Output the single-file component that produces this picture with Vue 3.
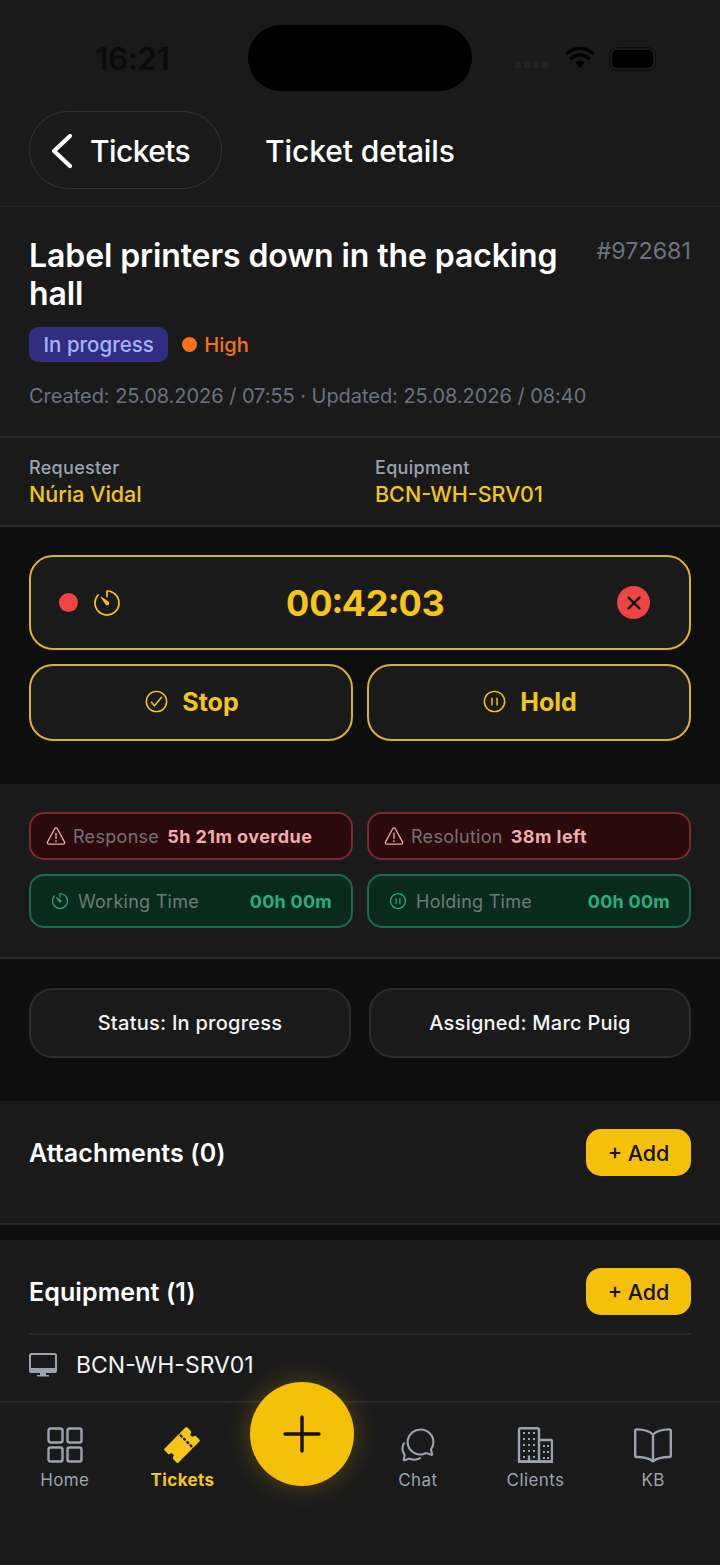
<script setup>
const navLeft = [
  { label: 'Home', key: 'home' },
  { label: 'Tickets', key: 'ticket', active: true },
]
const navRight = [
  { label: 'Chat', key: 'chat' },
  { label: 'Clients', key: 'clients' },
  { label: 'KB', key: 'kb' },
]
</script>

<template>
  <div class="app">
    <div class="scroll">
      <div class="top">
        <div class="statusbar">
          <span class="time">16:21</span>
          <span class="island"></span>
          <span class="signal"><i></i><i></i><i></i><i></i></span>
          <svg class="wifi" viewBox="0 0 32 26" width="30" height="24"><path d="M16 25 11 19a7.5 7.5 0 0 1 10 0Z" fill="#000"/><path d="M6.5 14.5a14 14 0 0 1 19 0M2 9a21 21 0 0 1 28 0" fill="none" stroke="#000" stroke-width="3.6" stroke-linecap="round"/></svg>
          <span class="battery"><i></i></span>
        </div>
        <div class="header">
          <div class="back">
            <svg viewBox="0 0 24 40" width="24" height="40"><path d="M20 5 4 20l16 15" fill="none" stroke="#fff" stroke-width="4.2" stroke-linecap="round" stroke-linejoin="round"/></svg>
            <span>Tickets</span>
          </div>
          <div class="header-title">Ticket details</div>
        </div>
      </div>

      <section class="info">
        <div class="title-row">
          <h1>Label printers down in the packing hall</h1>
          <span class="num">#972681</span>
        </div>
        <div class="badges">
          <span class="badge">In progress</span>
          <span class="prio"><i></i>High</span>
        </div>
        <p class="meta">Created: 25.08.2026 / 07:55 · Updated: 25.08.2026 / 08:40</p>
      </section>

      <section class="people">
        <div><div class="lbl">Requester</div><div class="val">Núria Vidal</div></div>
        <div><div class="lbl">Equipment</div><div class="val">BCN-WH-SRV01</div></div>
      </section>

      <section class="timer-sec">
        <div class="timer">
          <span class="rec"></span>
          <svg class="timer-ic" viewBox="0 0 512 512" width="32" height="32"><path d="M112.91 128A191.85 191.85 0 0 0 64 254c-1.18 106.35 85.65 193.8 192 194 106.2.2 192-85.83 192-192 0-104.54-83.55-189.61-187.5-192a4.36 4.36 0 0 0-4.5 4.37V152" fill="none" stroke="currentColor" stroke-width="28" stroke-linecap="round"/><path d="M233.38 278.63l-79-113a8.13 8.13 0 0 1 11.32-11.32l113 79a32.5 32.5 0 0 1-37.25 53.26 33.21 33.21 0 0 1-8.07-8.94z" fill="currentColor"/></svg>
          <span class="clock">00:42:03</span>
          <span class="close"><svg viewBox="0 0 20 20" width="18" height="18"><path d="M4 4l12 12M16 4 4 16" stroke="#1a1a1a" stroke-width="2.8" stroke-linecap="round"/></svg></span>
        </div>
        <div class="two gap14">
          <div class="tbtn">
            <svg viewBox="0 0 512 512" width="27" height="27"><path d="M448 256c0-106-86-192-192-192S64 150 64 256s86 192 192 192 192-86 192-192z" fill="none" stroke="currentColor" stroke-width="28"/><path d="M352 176L217.6 336 160 272" fill="none" stroke="currentColor" stroke-width="28" stroke-linecap="round" stroke-linejoin="round"/></svg>
            Stop
          </div>
          <div class="tbtn">
            <svg viewBox="0 0 512 512" width="27" height="27"><path d="M448 256c0-106-86-192-192-192S64 150 64 256s86 192 192 192 192-86 192-192z" fill="none" stroke="currentColor" stroke-width="28"/><path d="M208 192v128M304 192v128" fill="none" stroke="currentColor" stroke-width="28" stroke-linecap="round"/></svg>
            Hold
          </div>
        </div>
      </section>

      <section class="sla">
        <div class="two gap14">
          <div class="chip red">
            <svg viewBox="0 0 512 512" width="22" height="22"><path d="M85.57 446.25h340.86a32 32 0 0 0 28.17-47.17L284.18 82.58c-12.09-22.44-44.27-22.44-56.36 0L57.4 399.08a32 32 0 0 0 28.17 47.17z" fill="none" stroke="currentColor" stroke-width="30" stroke-linejoin="round"/><path d="M256 190v125" fill="none" stroke="currentColor" stroke-width="30" stroke-linecap="round"/><circle cx="256" cy="377" r="20" fill="currentColor"/></svg>
            <span class="k">Response</span><b>5h 21m overdue</b>
          </div>
          <div class="chip red">
            <svg viewBox="0 0 512 512" width="22" height="22"><path d="M85.57 446.25h340.86a32 32 0 0 0 28.17-47.17L284.18 82.58c-12.09-22.44-44.27-22.44-56.36 0L57.4 399.08a32 32 0 0 0 28.17 47.17z" fill="none" stroke="currentColor" stroke-width="30" stroke-linejoin="round"/><path d="M256 190v125" fill="none" stroke="currentColor" stroke-width="30" stroke-linecap="round"/><circle cx="256" cy="377" r="20" fill="currentColor"/></svg>
            <span class="k">Resolution</span><b>38m left</b>
          </div>
        </div>
        <div class="two gap14">
          <div class="chip green">
            <svg viewBox="0 0 512 512" width="22" height="22"><path d="M112.91 128A191.85 191.85 0 0 0 64 254c-1.18 106.35 85.65 193.8 192 194 106.2.2 192-85.83 192-192 0-104.54-83.55-189.61-187.5-192a4.36 4.36 0 0 0-4.5 4.37V152" fill="none" stroke="currentColor" stroke-width="32" stroke-linecap="round"/><path d="M233.38 278.63l-79-113a8.13 8.13 0 0 1 11.32-11.32l113 79a32.5 32.5 0 0 1-37.25 53.26 33.21 33.21 0 0 1-8.07-8.94z" fill="currentColor"/></svg>
            <span class="k">Working Time</span><b>00h 00m</b>
          </div>
          <div class="chip green">
            <svg viewBox="0 0 512 512" width="22" height="22"><path d="M448 256c0-106-86-192-192-192S64 150 64 256s86 192 192 192 192-86 192-192z" fill="none" stroke="currentColor" stroke-width="32"/><path d="M208 192v128M304 192v128" fill="none" stroke="currentColor" stroke-width="32" stroke-linecap="round"/></svg>
            <span class="k">Holding Time</span><b>00h 00m</b>
          </div>
        </div>
      </section>

      <section class="actions">
        <div class="act">Status: In progress</div>
        <div class="act">Assigned: Marc Puig</div>
      </section>

      <section class="block attach">
        <h2>Attachments (0)</h2>
        <span class="add">+ Add</span>
      </section>

      <section class="block equip">
        <div class="equip-head">
          <h2>Equipment (1)</h2>
          <span class="add">+ Add</span>
        </div>
        <div class="equip-row">
          <svg viewBox="0 0 28 24" width="28" height="24"><rect x="1" y="1" width="26" height="18" rx="1.6" fill="none" stroke="#9ca3af" stroke-width="2"/><rect x="1" y="15" width="26" height="4.5" fill="#9ca3af"/><path d="M11 19.5h6v2.4h-6zM8 22h12v1.6H8z" fill="#9ca3af"/></svg>
          <span>BCN-WH-SRV01</span>
        </div>
      </section>
    </div>

    <nav class="nav">
      <div v-for="n in navLeft" :key="n.key" class="tab" :class="{ on: n.active }">
        <svg v-if="n.key === 'home'" viewBox="0 0 36 36" width="36" height="36"><g fill="none" stroke="currentColor" stroke-width="2.4"><rect x="1.5" y="1.5" width="14" height="14" rx="2"/><rect x="20.5" y="1.5" width="14" height="14" rx="2"/><rect x="1.5" y="20.5" width="14" height="14" rx="2"/><rect x="20.5" y="20.5" width="14" height="14" rx="2"/></g></svg>
        <svg v-else viewBox="0 0 512 512" width="40" height="40"><path fill="currentColor" d="M490.18 181.4l-44.13-44.13a20 20 0 0 0-27-1 30.81 30.81 0 0 1-41.68-1.6 30.81 30.81 0 0 1-1.6-41.67 20 20 0 0 0-1-27L330.6 21.82a19.91 19.91 0 0 0-28.13 0l-70.35 70.34a39.87 39.87 0 0 0-9.57 15.5 7.71 7.71 0 0 1-4.83 4.83 39.78 39.78 0 0 0-15.5 9.58l-180.4 180.4a19.91 19.91 0 0 0 0 28.13L66 374.73a20 20 0 0 0 27 1 30.69 30.69 0 0 1 43.28 43.28 20 20 0 0 0 1 27l44.13 44.13a19.91 19.91 0 0 0 28.13 0l180.4-180.4a39.82 39.82 0 0 0 9.58-15.49 7.69 7.69 0 0 1 4.84-4.84 39.84 39.84 0 0 0 15.49-9.57l70.34-70.35a19.91 19.91 0 0 0-.01-28.09zm-228.37-29.65a16 16 0 0 1-22.63 0l-11.51-11.51a16 16 0 0 1 22.63-22.62l11.51 11.5a16 16 0 0 1 0 22.63zm44 44a16 16 0 0 1-22.62 0l-11-11a16 16 0 1 1 22.63-22.63l11 11a16 16 0 0 1 .01 22.66zm44 44a16 16 0 0 1-22.63 0l-11-11a16 16 0 0 1 22.63-22.62l11 11a16 16 0 0 1 .05 22.65zm44.43 44.54a16 16 0 0 1-22.63 0l-11.44-11.5a16 16 0 1 1 22.68-22.57l11.45 11.49a16 16 0 0 1-.01 22.58z"/></svg>
        <span>{{ n.label }}</span>
      </div>
      <div class="tab spacer"></div>
      <div v-for="n in navRight" :key="n.key" class="tab">
        <svg v-if="n.key === 'chat'" viewBox="0 0 512 512" width="40" height="40"><g fill="none" stroke="currentColor" stroke-width="28" stroke-linecap="round" stroke-miterlimit="10"><path d="M431 320.6c-1-3.6 1.2-8.6 3.3-12.2a33.68 33.68 0 0 1 2.1-3.1A162 162 0 0 0 464 215c.3-92.2-77.5-167-173.7-167-83.9 0-153.9 57.1-170.3 132.9a160.7 160.7 0 0 0-3.7 34.2c0 92.3 74.8 169.1 171 169.1 15.3 0 35.9-4.6 47.2-7.7s22.5-7.2 25.4-8.3a26.44 26.44 0 0 1 9.3-1.7 26 26 0 0 1 10.1 2l56.7 20.1a13.52 13.52 0 0 0 3.9 1 8 8 0 0 0 8-8 12.85 12.85 0 0 0-.5-2.7z"/><path d="M66.46 232a146.23 146.23 0 0 0 6.39 152.67c2.31 3.49 3.61 6.19 3.21 8s-11.93 61.87-11.93 61.87a8 8 0 0 0 2.71 7.68A8.17 8.17 0 0 0 72 464a7.26 7.26 0 0 0 2.91-.6l56.21-22a15.7 15.7 0 0 1 12 .2c18.94 7.38 39.88 12 60.83 12A159.21 159.21 0 0 0 284 432.11"/></g></svg>
        <svg v-else-if="n.key === 'clients'" viewBox="0 0 36 36" width="36" height="36"><g fill="none" stroke="currentColor" stroke-width="2.4" stroke-linejoin="round"><path d="M2 34.5V2.6a1.4 1.4 0 0 1 1.4-1.4h17.2a1.4 1.4 0 0 1 1.4 1.4v31.9z"/><path d="M22 13h11.6a1.4 1.4 0 0 1 1.4 1.4v20.1H22"/><path d="M1 34.8h35M12 34.5v-6"/></g><g fill="currentColor"><rect x="6" y="5" width="2" height="2"/><rect x="11" y="5" width="2" height="2"/><rect x="16" y="5" width="2" height="2"/><rect x="6" y="11" width="2" height="2"/><rect x="11" y="11" width="2" height="2"/><rect x="16" y="11" width="2" height="2"/><rect x="6" y="17" width="2" height="2"/><rect x="11" y="17" width="2" height="2"/><rect x="16" y="17" width="2" height="2"/><rect x="6" y="23" width="2" height="2"/><rect x="11" y="23" width="2" height="2"/><rect x="16" y="23" width="2" height="2"/><rect x="6" y="29" width="2" height="2"/><rect x="16" y="29" width="2" height="2"/><rect x="26" y="18" width="2" height="2"/><rect x="30" y="18" width="2" height="2"/><rect x="26" y="24" width="2" height="2"/><rect x="30" y="24" width="2" height="2"/><rect x="26" y="30" width="2" height="2"/><rect x="30" y="30" width="2" height="2"/></g></svg>
        <svg v-else viewBox="0 0 38 34" width="38" height="34"><path d="M19 6.5C15.5 2.8 9.5 1.5 2.6 1.4A1.4 1.4 0 0 0 1.2 2.8v24.8c0 .8.6 1.4 1.4 1.4 7 .1 12.4 1.2 16.4 4.2 4-3 9.4-4.1 16.4-4.2.8 0 1.4-.6 1.4-1.4V2.8a1.4 1.4 0 0 0-1.4-1.4C28.5 1.5 22.5 2.8 19 6.5zM19 6.5v26.7" fill="none" stroke="currentColor" stroke-width="2.4" stroke-linejoin="round"/></svg>
        <span>{{ n.label }}</span>
      </div>
    </nav>

    <div class="fab">
      <svg viewBox="0 0 38 38" width="38" height="38"><path d="M19 2v34M2 19h34" stroke="#111" stroke-width="3.4" stroke-linecap="round"/></svg>
    </div>
  </div>
</template>

<style>
html, body { margin: 0; background: #1a1a1a; }
</style>

<style scoped>
* { box-sizing: border-box; }
.app {
  position: relative;
  width: 720px;
  height: 1565px;
  display: flex;
  flex-direction: column;
  overflow: hidden;
  background: #1a1a1a;
  font-family: Inter, "Noto Sans", sans-serif;
  color: #fff;
}
.scroll { flex: 1; min-height: 0; overflow: hidden; background: #0e0e0e; }

.top { background: #1a1a1a; height: 207px; border-bottom: 1px solid #222; }
.statusbar { height: 111px; padding-top: 25px; display: flex; align-items: flex-start; }
.time {
  margin: 20px 0 0 95px; width: 153px;
  font: 600 31.5px/28px Inter, sans-serif; letter-spacing: -0.4px; color: #0b0b0b;
}
.island { width: 224px; height: 66px; border-radius: 33px; background: #000; }
.signal { display: flex; gap: 3px; margin: 37px 0 0 43px; width: 50px; }
.signal i { width: 6px; height: 6px; border-radius: 1px; background: #222; }
.wifi { margin: 20px 0 0 0; }
.battery {
  margin: 22px 0 0 14px; width: 47px; height: 24px;
  border: 1.5px solid #0c0c0c; border-radius: 8px; padding: 2px;
  display: flex;
}
.battery i { flex: 1; background: #000; border-radius: 5px; }

.header { display: flex; align-items: center; padding-left: 29px; height: 78px; }
.back {
  width: 193px; height: 78px; border: 1.5px solid #333; border-radius: 39px;
  display: flex; align-items: center; gap: 16px; padding-left: 20px; padding-top: 1px;
  font-size: 30px; font-weight: 500; color: #fff; letter-spacing: -0.6px;
}
.header-title { margin-left: 43px; padding-top: 2px; font-size: 30px; font-weight: 500; letter-spacing: -0.1px; }

.info { background: #1a1a1a; height: 231px; padding: 30px 29px 0; border-bottom: 2px solid #2a2a2a; }
.title-row { display: flex; justify-content: space-between; align-items: flex-start; gap: 24px; }
h1 { margin: 0; width: 540px; font-size: 32px; line-height: 38px; font-weight: 600; letter-spacing: -0.1px; }
.num { font-size: 23.3px; line-height: 28px; color: #6b7280; }
.badges { display: flex; align-items: center; gap: 14px; margin-top: 14px; }
.badge {
  height: 35px; padding: 0 14.5px; border-radius: 9px; background: #312e81; color: #a5b4fc;
  font-size: 20.5px; font-weight: 500; line-height: 35px;
}
.prio { display: flex; align-items: center; gap: 7px; color: #f97316; font-size: 20px; font-weight: 500; }
.prio i { width: 15px; height: 15px; border-radius: 50%; background: #f97316; }
.meta { margin: 21px 0 0; font-size: 20px; line-height: 26px; color: #6b7280; letter-spacing: -0.04px; }

.people {
  background: #1a1a1a; height: 89px; padding: 18px 29px 0;
  display: grid; grid-template-columns: 346px 1fr; border-bottom: 2px solid #2a2a2a;
}
.lbl { font-size: 18px; line-height: 24px; font-weight: 500; color: #9ca3af; letter-spacing: 0.3px; }
.val { font-size: 21.5px; line-height: 30px; color: #f5c518; font-weight: 500; margin-top: -1px; }

.timer-sec { height: 257px; padding: 28px 29px 0; }
.timer {
  height: 95px; border: 2px solid #d9b13a; border-radius: 24px; background: #1a1a1a;
  display: flex; align-items: center; padding: 0 39px 0 28px; position: relative;
}
.rec { width: 19px; height: 19px; border-radius: 50%; background: #ef4444; }
.timer-ic { color: #f5c518; margin-left: 13px; }
.clock {
  position: absolute; left: 0; right: 0; text-align: center; padding-left: 11px; top: 25px; line-height: 42px;
  font-size: 36px; font-weight: 700; color: #f5c518; font-variant-numeric: tabular-nums;
}
.close {
  margin-left: auto; width: 33px; height: 33px; border-radius: 50%; background: #ef4444;
  display: flex; align-items: center; justify-content: center; position: relative;
}
.two { display: grid; grid-template-columns: 1fr 1fr; }
.gap14 { column-gap: 14px; }
.timer + .two { margin-top: 14px; }
.tbtn {
  height: 77px; border: 2px solid #d9b13a; border-radius: 24px; background: #1a1a1a;
  display: flex; align-items: center; justify-content: center; gap: 12px; padding-bottom: 2px;
  color: #f5c518; font-size: 25px; font-weight: 700;
}

.sla { background: #1a1a1a; height: 175px; padding: 28px 29px 0; border-bottom: 2px solid #2a2a2a; }
.sla .two + .two { margin-top: 14px; }
.chip {
  display: flex; align-items: center; border-radius: 15px; font-size: 18px; letter-spacing: 0.3px;
}
.chip .k { color: #76717a; }
.red { height: 48px; background: #2a0a0b; border: 2px solid #7a2a2e; padding: 0 14px; gap: 8px; }
.red svg { color: #f0a8a8; margin-right: -2px; }
.red b { color: #f3aaaa; font-weight: 700; letter-spacing: 0.45px; }
.green {
  height: 54px; background: #0b2a1e; border: 2px solid #1a6b50; padding: 0 19px 0 19px; gap: 8px;
  font-size: 18px; letter-spacing: 0.25px;
}
.green .k { color: #6b7c76; }
.green svg { color: #26b07c; width: 20px; height: 20px; }
.green b { margin-left: auto; color: #26b07c; font-weight: 700; }

.actions { height: 142px; padding: 29px 29px 0; display: grid; grid-template-columns: 322px 322px; column-gap: 18px; }
.act {
  height: 70px; border: 2px solid #2c2c2c; border-radius: 24px; background: #1a1a1a;
  display: flex; align-items: center; justify-content: center;
  font-size: 20px; font-weight: 500; color: #f3f4f6; letter-spacing: 0.25px;
}

.block { background: #1a1a1a; padding: 0 29px; }
h2 { margin: 0; font-size: 25px; font-weight: 600; line-height: 30px; letter-spacing: 0.1px; }
.add {
  width: 105px; height: 47px; border-radius: 15px; background: #f5c108; color: #111;
  display: flex; align-items: center; justify-content: center;
  font-size: 21.5px; font-weight: 500;
}
.attach {
  height: 124px; padding-top: 28px; display: flex; justify-content: space-between; align-items: flex-start;
  border-bottom: 2px solid #2a2a2a;
}
.attach h2 { margin-top: 9px; }
.equip { margin-top: 15px; padding-top: 28px; height: 161px; }
.equip-head { display: flex; justify-content: space-between; align-items: center; padding-bottom: 18px; border-bottom: 2px solid #2a2a2a; }
.equip-row { display: flex; align-items: center; gap: 19px; padding-top: 16px; font-size: 23px; color: #f3f4f6; }

.nav {
  flex: none; height: 164px; background: #1a1a1a; border-top: 2px solid #2a2a2a;
  display: grid; grid-template-columns: repeat(6, 1fr); padding: 23px 8px 0 6px;
}
.tab { display: flex; flex-direction: column; align-items: center; color: #9ca3af; font-size: 17px; font-weight: 400; letter-spacing: 0.4px; }
.tab svg { height: 38px; }
.tab span { margin-top: 5px; line-height: 22px; }
.tab.on { color: #f5c518; font-weight: 700; }
.fab {
  position: absolute; left: 250px; top: 1382px; width: 104px; height: 104px; border-radius: 50%;
  background: #f5c108; display: flex; align-items: center; justify-content: center;
  box-shadow: 0 0 26px rgba(245, 193, 8, 0.28);
}
</style>
